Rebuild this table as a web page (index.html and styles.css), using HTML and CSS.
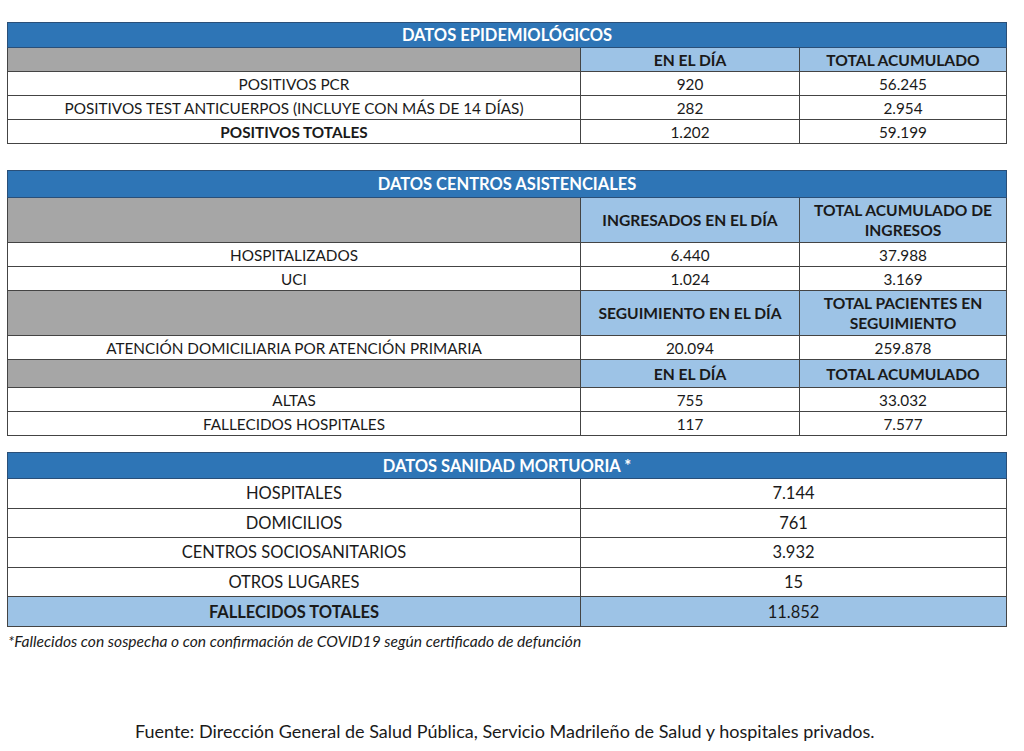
FILE: index.html
```html
<!DOCTYPE html>
<html lang="es">
<head>
<meta charset="utf-8">
<link rel="stylesheet" href="styles.css">
</head>
<body>
<div class="page">
  <table class="data t1">
    <colgroup><col class="c1"><col class="c2"><col class="c3"></colgroup>
    <tr class="title"><td colspan="3">DATOS EPIDEMIOLÓGICOS</td></tr>
    <tr class="head"><td class="gray"></td><td>EN EL DÍA</td><td>TOTAL ACUMULADO</td></tr>
    <tr><td>POSITIVOS PCR</td><td>920</td><td>56.245</td></tr>
    <tr><td>POSITIVOS TEST ANTICUERPOS (INCLUYE CON MÁS DE 14 DÍAS)</td><td>282</td><td>2.954</td></tr>
    <tr class="last"><td class="b">POSITIVOS TOTALES</td><td>1.202</td><td>59.199</td></tr>
  </table>

  <table class="data t2">
    <colgroup><col class="c1"><col class="c2"><col class="c3"></colgroup>
    <tr class="title"><td colspan="3">DATOS CENTROS ASISTENCIALES</td></tr>
    <tr class="head tall"><td class="gray"></td><td>INGRESADOS EN EL DÍA</td><td>TOTAL ACUMULADO DE<br>INGRESOS</td></tr>
    <tr><td>HOSPITALIZADOS</td><td>6.440</td><td>37.988</td></tr>
    <tr><td>UCI</td><td>1.024</td><td>3.169</td></tr>
    <tr class="head tall"><td class="gray"></td><td>SEGUIMIENTO EN EL DÍA</td><td>TOTAL PACIENTES EN<br>SEGUIMIENTO</td></tr>
    <tr><td>ATENCIÓN DOMICILIARIA POR ATENCIÓN PRIMARIA</td><td>20.094</td><td>259.878</td></tr>
    <tr class="head mid"><td class="gray"></td><td>EN EL DÍA</td><td>TOTAL ACUMULADO</td></tr>
    <tr><td>ALTAS</td><td>755</td><td>33.032</td></tr>
    <tr class="last"><td>FALLECIDOS HOSPITALES</td><td>117</td><td>7.577</td></tr>
  </table>

  <table class="data t3">
    <colgroup><col class="c1"><col class="c23"></colgroup>
    <tr class="title"><td colspan="2">DATOS SANIDAD MORTUORIA *</td></tr>
    <tr><td>HOSPITALES</td><td>7.144</td></tr>
    <tr><td>DOMICILIOS</td><td>761</td></tr>
    <tr><td>CENTROS SOCIOSANITARIOS</td><td>3.932</td></tr>
    <tr><td>OTROS LUGARES</td><td>15</td></tr>
    <tr class="total"><td class="b">FALLECIDOS TOTALES</td><td>11.852</td></tr>
  </table>

  <p class="note">*Fallecidos con sospecha o con confirmación de COVID19 según certificado de defunción</p>

  <p class="source">Fuente: Dirección General de Salud Pública, Servicio Madrileño de Salud y hospitales privados.</p>
</div>
</body>
</html>
```

FILE: styles.css
```css
html, body {
  margin: 0;
  padding: 0;
  background: #ffffff;
}

.page {
  width: 1024px;
  height: 751px;
  padding: 22px 0 0 7px;
  box-sizing: border-box;
  font-family: "Lato", "Open Sans", sans-serif;
  color: #1a1a1a;
}

.data {
  width: 999px;
  border-collapse: collapse;
  table-layout: fixed;
  font-size: 15.3px;
}

.c1 { width: 573px; }
.c2 { width: 219px; }
.c3 { width: 207px; }
.c23 { width: 426px; }

.data td {
  border: 1px solid #444;
  text-align: center;
  vertical-align: middle;
  padding: 0;
  height: 23px;
  line-height: 18px;
  white-space: nowrap;
}

.data .title td {
  background: #2e75b6;
  color: #ffffff;
  font-weight: 700;
  font-size: 16.5px;
  height: 24px;
  border-color: #2a4f78;
}

.data .head td {
  background: #9dc3e6;
  font-weight: 700;
  font-size: 15.6px;
}

.data .head td.gray {
  background: #a6a6a6;
}

.data .head.tall td {
  height: 44px;
  line-height: 20px;
}

.data .head.mid td {
  height: 27px;
}

.data .b {
  font-weight: 700;
}

.t2 {
  margin-top: 26px;
}

.t2 .title td {
  height: 26px;
}

.t3 {
  margin-top: 16px;
  font-size: 16.5px;
}

.t3 .title td {
  height: 25px;
}

.t3 td {
  height: 28.6px;
}

.t3 .total td {
  background: #9dc3e6;
}

.note {
  margin: 5px 0 0 1px;
  font-size: 15.6px;
  font-style: italic;
  color: #1a1a1a;
}

.source {
  margin: 70px 0 0 128px;
  font-size: 18px;
  color: #1a1a1a;
}
```
